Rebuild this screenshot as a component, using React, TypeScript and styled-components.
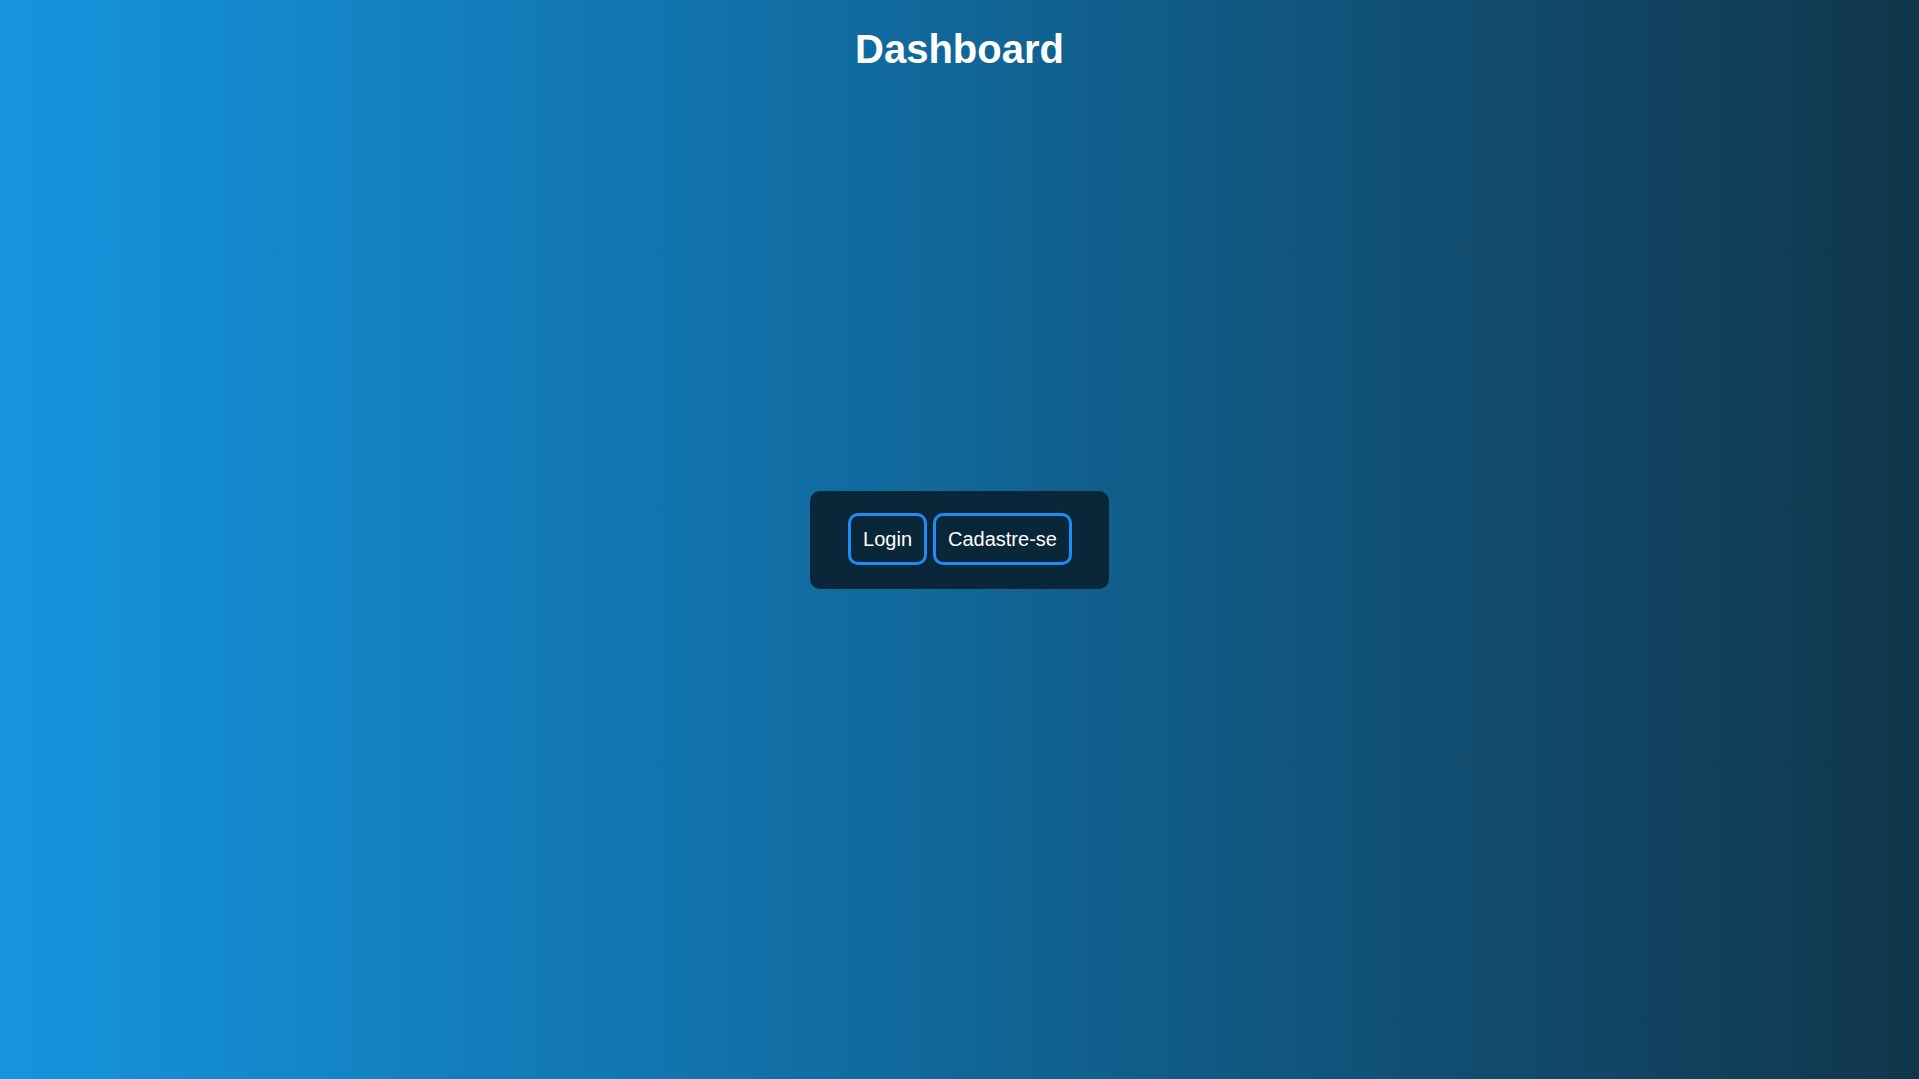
import React from 'react';
import styled, {createGlobalStyle} from 'styled-components';

const GlobalStyle = createGlobalStyle`
  html, body {
    margin: 0;
    padding: 0;
  }
  body {
    font-family: 'Liberation Sans', Arial, sans-serif;
    color: #ffffff;
  }
`;

const Page = styled.div`
  min-height: 100vh;
  display: grid;
  grid-template-rows: 1fr auto 1fr;
  justify-items: center;
  background: linear-gradient(to right, #1594de, #116ba0 45%, #11364b);
`;

const Title = styled.h1`
  align-self: start;
  margin: 26px 0 0;
  font-size: 40px;
  font-weight: 700;
  line-height: 46px;
  color: #ffffff;
`;

const Card = styled.div`
  display: flex;
  gap: 6px;
  padding: 22px 37px 24px 38px;
  background: #0a2639;
  border-radius: 10px;
`;

const Button = styled.button`
  padding: 11px 12px;
  font-family: 'Liberation Sans', Arial, sans-serif;
  font-size: 20px;
  line-height: 24px;
  color: #ffffff;
  background: transparent;
  border: 3px solid #1e8cf5;
  border-radius: 10px;
  cursor: pointer;
`;

const App = () => (
  <>
    <GlobalStyle/>
    <Page>
      <Title>Dashboard</Title>
      <Card>
        <Button>Login</Button>
        <Button>Cadastre-se</Button>
      </Card>
    </Page>
  </>
);

export default App;
